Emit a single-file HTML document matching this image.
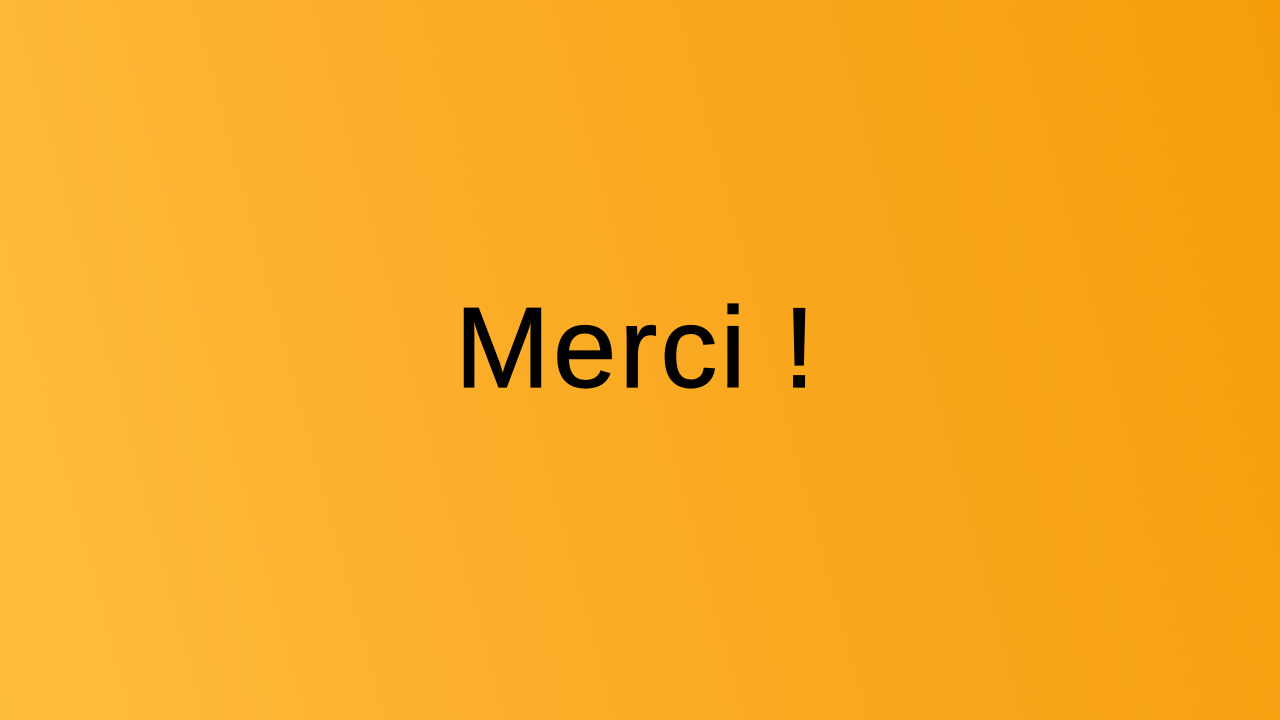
<!DOCTYPE html>
<html><head><meta charset="utf-8"><style>
html,body{margin:0;padding:0;width:1280px;height:720px;overflow:hidden}
body{background:linear-gradient(75deg,#ffbd3c 0%,#fbad28 40%,#f59e0a 100%);position:relative;font-family:"Liberation Sans",sans-serif}
.t{position:absolute;left:455px;top:284px;font-size:114px;line-height:130px;color:#000;white-space:nowrap;letter-spacing:3px;-webkit-text-stroke:1.2px #000}
</style></head><body>
<div class="t">Merci !</div>
</body></html>
